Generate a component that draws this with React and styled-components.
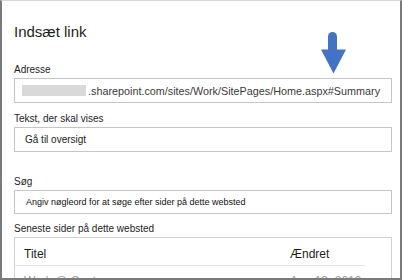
import styled, { createGlobalStyle } from 'styled-components'

const Global = createGlobalStyle`
  html, body { margin: 0; padding: 0; background: #fff; }
  body { font-family: "Liberation Sans", Arial, sans-serif; }
`

const Dialog = styled.div`
  position: relative;
  box-sizing: border-box;
  width: 402px;
  height: 280px;
  overflow: hidden;
  background: #fff;
  border-left: 2px solid #7b7b7b;
  border-right: 2px solid #7b7b7b;
  border-bottom: 2px solid #7b7b7b;
  border-top: 1px solid #d6d6d6;
  padding: 22px 8px 0 12px;
  display: flex;
  flex-direction: column;
`

const Title = styled.h1`
  margin: 0;
  font-size: 15px;
  line-height: 18px;
  font-weight: normal;
  color: #1e1e1e;
`

const Field = styled.div`
  display: flex;
  flex-direction: column;
  gap: 2px;
  margin-top: ${p => p.$top}px;
`

const Label = styled.label`
  font-size: 10px;
  line-height: 13px;
  color: #1e1e1e;
`

const Input = styled.div`
  box-sizing: border-box;
  height: ${p => p.$h || 25}px;
  border: 1px solid #c6c6c6;
  display: flex;
  align-items: center;
  padding-left: ${p => p.$pad}px;
  font-size: ${p => p.$size}px;
  color: ${p => p.$color || '#333'};
  white-space: nowrap;
  overflow: hidden;
`

const Redacted = styled.span`
  display: inline-block;
  width: 64px;
  height: 11px;
  background: #d9d9d9;
  margin-right: 2px;
`

const Table = styled.div`
  border: 1px solid #d2d2d2;
  height: 80px;
`

const HeadRow = styled.div`
  display: grid;
  grid-template-columns: 266px 1fr;
  box-sizing: border-box;
  height: 28px;
  padding: 9px 0 0 9px;
  margin-right: 26px;
  border-bottom: 1px solid #e6e6e6;
  font-size: 12px;
  line-height: 14px;
  color: #1e1e1e;
`

const BodyRow = styled(HeadRow)`
  border-bottom: none;
  padding-top: 8px;
  color: #a0a0a0;
`

const Arrow = styled.svg`
  position: absolute;
  left: 318px;
  top: 29px;
`

export default function App() {
  return (
    <>
      <Global />
      <Dialog>
        <Title>Indsæt link</Title>

        <Field $top={22}>
          <Label>Adresse</Label>
          <Input $pad={7} $size={10.8} $color="#3a3a3a">
            <Redacted />
            .sharepoint.com/sites/Work/SitePages/Home.aspx#Summary
          </Input>
        </Field>

        <Field $top={9}>
          <Label>Tekst, der skal vises</Label>
          <Input $pad={10} $size={10} $color="#222">Gå til oversigt</Input>
        </Field>

        <Field $top={23}>
          <Label>Søg</Label>
          <Input $pad={11} $size={9} $h={24} $color="#111">
            Angiv nøgleord for at søge efter sider på dette websted
          </Input>
        </Field>

        <Field $top={8}>
          <Label>Seneste sider på dette websted</Label>
          <Table>
            <HeadRow>
              <span>Titel</span>
              <span>Ændret</span>
            </HeadRow>
            <BodyRow>
              <span>Work @ Contoso</span>
              <span>Aug 13, 2019</span>
            </BodyRow>
          </Table>
        </Field>

        <Arrow width="28" height="46" viewBox="0 0 28 46">
          <path d="M8 6.5a4.5 4.5 0 0 1 9 0V20H8Z" fill="#4472c4" />
          <path d="M1 19.5H26L13.5 43.5Z" fill="#4472c4" />
        </Arrow>
      </Dialog>
    </>
  )
}
